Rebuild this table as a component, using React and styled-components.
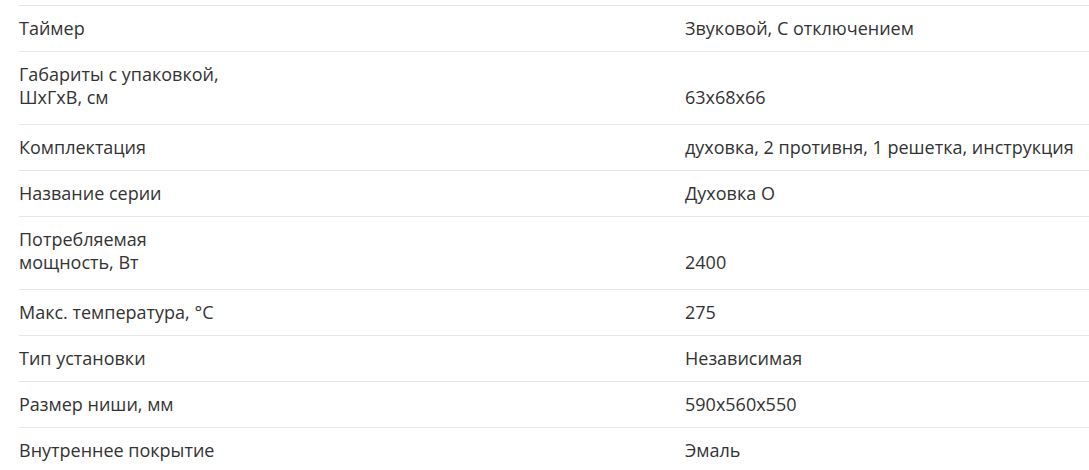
import React from "react";
import styled, { createGlobalStyle } from "styled-components";

const GlobalStyle = createGlobalStyle`
  html, body {
    margin: 0;
    padding: 0;
    background: #fff;
  }
  body {
    font-family: "Open Sans", "Liberation Sans", sans-serif;
    color: #333;
  }
`;

const specs = [
  { label: "Таймер", value: "Звуковой, С отключением" },
  { label: ["Габариты с упаковкой,", "ШхГхВ, см"], value: "63x68x66" },
  { label: "Комплектация", value: "духовка, 2 противня, 1 решетка, инструкция" },
  { label: "Название серии", value: "Духовка О" },
  { label: ["Потребляемая", "мощность, Вт"], value: "2400" },
  { label: "Макс. температура, °С", value: "275" },
  { label: "Тип установки", value: "Независимая" },
  { label: "Размер ниши, мм", value: "590x560x550" },
  { label: "Внутреннее покрытие", value: "Эмаль" },
];

function App() {
  return (
    <>
      <GlobalStyle />
      <SpecsWrapper>
        <SpecsList>
          {specs.map((item) => {
            const lines = Array.isArray(item.label) ? item.label : [item.label];
            return (
              <SpecRow key={lines.join(" ")} tall={lines.length > 1}>
                <SpecLabel>
                  {lines.map((line) => (
                    <span key={line}>{line}</span>
                  ))}
                </SpecLabel>
                <SpecValue>{item.value}</SpecValue>
              </SpecRow>
            );
          })}
        </SpecsList>
      </SpecsWrapper>
    </>
  );
}

export const SpecsWrapper = styled.div`
  padding: 5px 0 0 19px;
  overflow: hidden;
`;

export const SpecsList = styled.div`
  display: flex;
  flex-direction: column;
`;

export const SpecRow = styled.div`
  display: grid;
  grid-template-columns: 666px 1fr;
  align-items: end;
  border-top: 1px solid #e6e6e6;
  padding: 11px 0 ${(p) => (p.tall ? "15px" : "11px")};
  font-size: 18px;
  line-height: 23px;
`;

export const SpecLabel = styled.div`
  display: flex;
  flex-direction: column;
  max-width: 210px;
`;

export const SpecValue = styled.div`
  white-space: nowrap;
`;

export default App;
